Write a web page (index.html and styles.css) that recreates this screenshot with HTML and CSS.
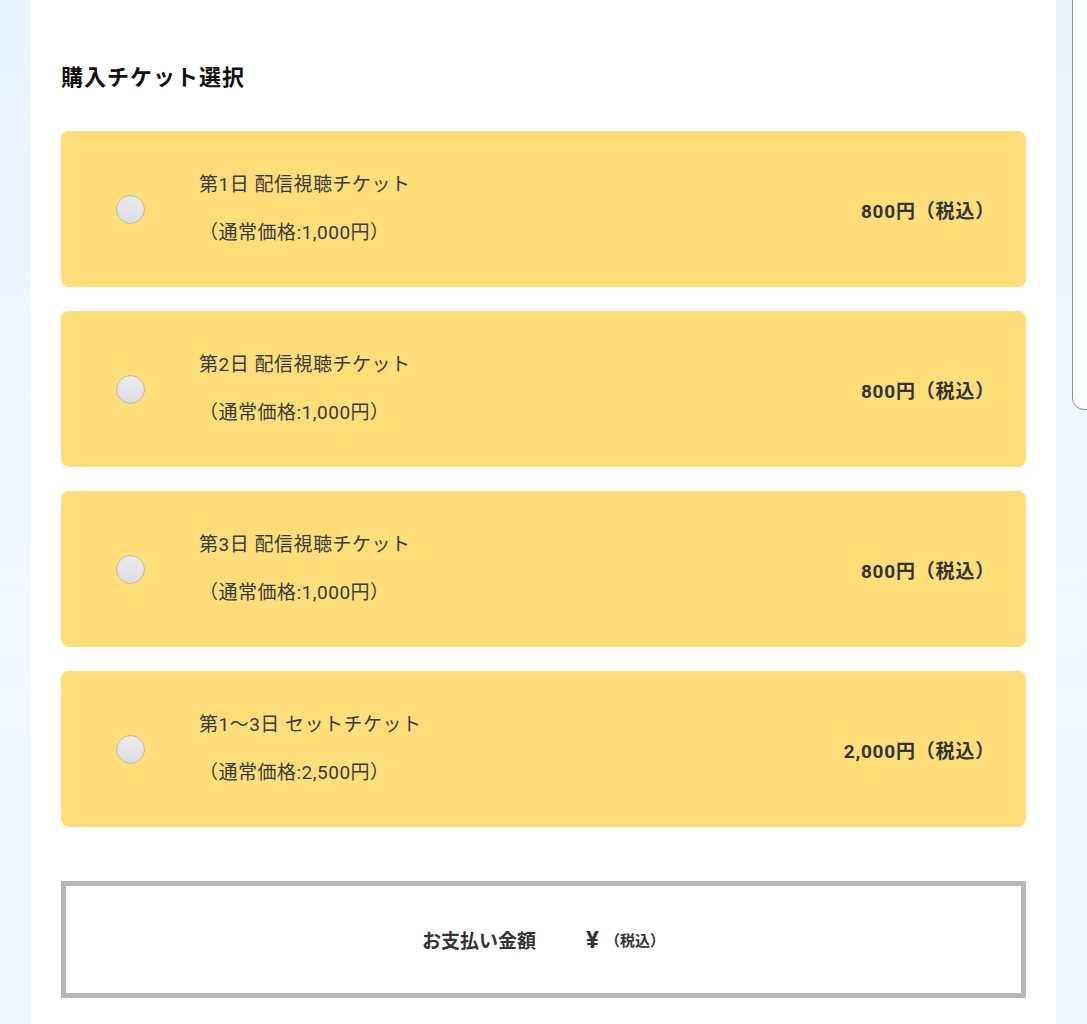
FILE: index.html
```html
<!DOCTYPE html>
<html lang="ja">
<head>
    <meta charset="UTF-8">
    <meta name="viewport" content="width=device-width, initial-scale=1.0">
    <title>購入チケット選択</title>
    <link rel="stylesheet" href="styles.css">
</head>
<body>
    <div class="side-box"></div>
    <div class="panel">
        <h2 class="section-title">購入チケット選択</h2>
        <div class="ticket-list">
            <label class="ticket">
                <span class="ticket-radio"><input type="radio" name="ticket" value="day1"></span>
                <span class="ticket-info">
                    <span class="ticket-name">第1日 配信視聴チケット</span>
                    <span class="ticket-regular">（通常価格:1,000円）</span>
                </span>
                <span class="ticket-price">800円（税込）</span>
            </label>
            <label class="ticket">
                <span class="ticket-radio"><input type="radio" name="ticket" value="day2"></span>
                <span class="ticket-info">
                    <span class="ticket-name">第2日 配信視聴チケット</span>
                    <span class="ticket-regular">（通常価格:1,000円）</span>
                </span>
                <span class="ticket-price">800円（税込）</span>
            </label>
            <label class="ticket">
                <span class="ticket-radio"><input type="radio" name="ticket" value="day3"></span>
                <span class="ticket-info">
                    <span class="ticket-name">第3日 配信視聴チケット</span>
                    <span class="ticket-regular">（通常価格:1,000円）</span>
                </span>
                <span class="ticket-price">800円（税込）</span>
            </label>
            <label class="ticket">
                <span class="ticket-radio"><input type="radio" name="ticket" value="set"></span>
                <span class="ticket-info">
                    <span class="ticket-name">第1〜3日 セットチケット</span>
                    <span class="ticket-regular">（通常価格:2,500円）</span>
                </span>
                <span class="ticket-price">2,000円（税込）</span>
            </label>
        </div>
        <div class="total">
            <span class="total-label">お支払い金額</span>
            <span class="total-yen">¥</span>
            <span class="total-tax">（税込）</span>
        </div>
    </div>
</body>
</html>
```

FILE: styles.css
```css
body {
    font-family: "Roboto", "Noto Sans CJK JP", sans-serif;
    margin: 0;
    background: linear-gradient(180deg, #e9f3fd 0%, #f0f7fe 60%, #eef6fe 100%);
    color: #3a3a3a;
    overflow: hidden;
}

.panel {
    margin-left: 30px;
    width: 1026px;
    min-height: 1024px;
    box-sizing: border-box;
    padding: 62px 30px 0 31px;
    background-color: #ffffff;
}

.section-title {
    margin: 0 0 37px;
    font-size: 22px;
    line-height: 32px;
    font-weight: 700;
    color: #111111;
    letter-spacing: 1px;
}

.ticket-list {
    display: flex;
    flex-direction: column;
    gap: 24px;
}

.ticket {
    display: flex;
    align-items: center;
    height: 156px;
    padding: 0 31px 0 55px;
    box-sizing: border-box;
    background-color: #fede7a;
    border-radius: 8px;
    cursor: pointer;
}

.ticket-radio {
    display: flex;
    margin-right: 54px;
}

.ticket-radio input {
    appearance: none;
    -webkit-appearance: none;
    margin: 0;
    width: 29px;
    height: 29px;
    border-radius: 50%;
    border: 1.5px solid #c9b98c;
    background: linear-gradient(180deg, #e9e9ec 0%, #dcdce0 100%);
    cursor: pointer;
}

.ticket-radio input:checked {
    background: radial-gradient(circle, #555 0 6px, #e4e4e8 7px);
}

.ticket-info {
    display: flex;
    flex-direction: column;
    flex: 1;
}

.ticket-name,
.ticket-regular {
    font-size: 19px;
    line-height: 48px;
    letter-spacing: 0.5px;
}

.ticket-price {
    font-size: 19px;
    font-weight: 700;
    color: #333333;
    letter-spacing: 0.8px;
}

.total {
    display: flex;
    justify-content: center;
    align-items: center;
    margin-top: 54px;
    height: 117px;
    box-sizing: border-box;
    border: 5px solid #b7b7b7;
    background-color: #ffffff;
    color: #333333;
    font-weight: 700;
}

.total-label {
    font-size: 19px;
    margin-right: 50px;
}

.total-yen {
    font-size: 24px;
    margin-right: 6px;
}

.total-tax {
    font-size: 15px;
}

.side-box {
    position: fixed;
    top: -2px;
    left: 1072px;
    width: 40px;
    height: 410px;
    border: 1.5px solid #8f8f8f;
    border-radius: 0 0 0 12px;
    background-color: #f9fbfe;
}
```
